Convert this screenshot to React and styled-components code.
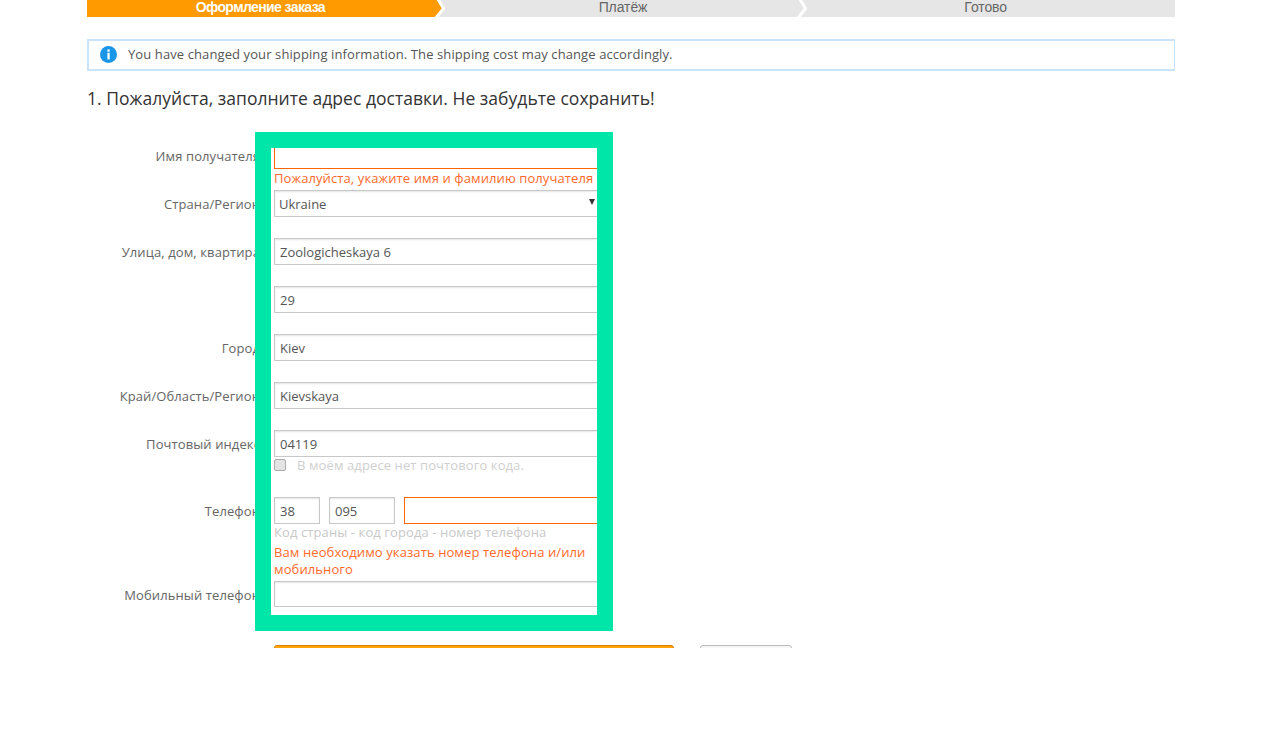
import React from "react";
import styled, { createGlobalStyle } from "styled-components";

const GlobalStyle = createGlobalStyle`
  html, body {
    margin: 0;
    background: #fff;
  }
  body {
    font-family: "Open Sans", "Liberation Sans", sans-serif;
    font-size: 13px;
    letter-spacing: 0.1px;
    color: #555;
  }
`;

const S = {
  Page: styled.div`
    width: 1088px;
    height: 648px;
    margin-left: 87px;
    overflow: hidden;
  `,
  Steps: styled.div`
    display: flex;
    height: 17px;
    background: #e6e6e6;
  `,
  Step: styled.div`
    position: relative;
    flex: 1;
    padding-right: 16px;
    font-family: "Liberation Sans", Arial, sans-serif;
    font-size: 14px;
    line-height: 14px;
    letter-spacing: -0.1px;
    text-align: center;
    color: #666;
  `,
  ActiveFill: styled.div`
    padding-right: 16px;
    margin-right: -16px;
    height: 17px;
    background: #ff9a00;
    color: #fff;
    font-weight: bold;
    letter-spacing: -0.6px;
    clip-path: polygon(0 0, calc(100% - 13px) 0, calc(100% - 7px) 50%, calc(100% - 15px) 100%, 0 100%);
  `,
  Chevron: styled.svg`
    position: absolute;
    top: 0;
    right: 3px;
    width: 16px;
    height: 17px;
  `,
  Alert: styled.div`
    display: flex;
    align-items: center;
    gap: 11px;
    box-sizing: border-box;
    height: 32px;
    margin: 22px -1px 0 0;
    padding: 0 0 2px 11px;
    border: 2px solid #c9e3fd;
    color: #555;
    line-height: 26px;
  `,
  Title: styled.h2`
    margin: 15px 0 0;
    font-size: 17.5px;
    font-weight: 500;
    letter-spacing: 0.03px;
    line-height: 24px;
    color: #333;
  `,
  Form: styled.div`
    position: relative;
    margin-top: 22px;
    padding-top: 10px;
  `,
  Frame: styled.div`
    position: absolute;
    top: 0;
    left: 168px;
    box-sizing: border-box;
    width: 358px;
    height: 499px;
    border: 16px solid #00e6a8;
    pointer-events: none;
  `,
  Row: styled.div`
    display: flex;
    margin-bottom: ${(p) => p.$gap ?? 21}px;
  `,
  LabelCell: styled.div`
    flex: none;
    width: 168px;
    margin-right: 19px;
    overflow: hidden;
  `,
  Label: styled.div`
    width: 173px;
    height: 27px;
    line-height: 29px;
    text-align: right;
    white-space: nowrap;
    color: #666;
  `,
  FieldCell: styled.div`
    position: relative;
    flex: none;
    width: 323px;
    overflow: hidden;
  `,
  Input: styled.input`
    display: block;
    box-sizing: border-box;
    flex: none;
    width: ${(p) => p.$width ?? 400}px;
    height: ${(p) => p.$height ?? 27}px;
    padding: 0 5px;
    border: 1px solid ${(p) => (p.$error ? "#ff6600" : "#c8c8c8")};
    border-radius: 0;
    outline: none;
    box-shadow: ${(p) => (p.$error ? "none" : "inset 0 1px 2px rgba(0, 0, 0, 0.1)")};
    background: #fff;
    font: 13px "Open Sans", sans-serif;
    color: #555;
  `,
  Select: styled.select`
    display: block;
    box-sizing: border-box;
    width: 400px;
    height: 27px;
    padding: 0 4px;
    border: 1px solid #c8c8c8;
    border-radius: 0;
    outline: none;
    appearance: none;
    box-shadow: inset 0 1px 2px rgba(0, 0, 0, 0.1);
    background: #fff;
    font: 13px "Open Sans", sans-serif;
    color: #555;
  `,
  Arrow: styled.span`
    position: absolute;
    top: 9px;
    right: 2px;
    border-style: solid;
    border-width: 6px 3px 0;
    border-color: #333 transparent transparent;
  `,
  Error: styled.div`
    padding-top: ${(p) => p.$top ?? 0}px;
    line-height: 17px;
    color: #ff6a2b;
  `,
  Hint: styled.div`
    line-height: 17px;
    color: #c9c9c9;
  `,
  CheckLine: styled.label`
    display: flex;
    align-items: center;
    gap: 11px;
    height: 16px;
    margin-bottom: 1px;
    color: #cfcfcf;
  `,
  Checkbox: styled.span`
    box-sizing: border-box;
    width: 12px;
    height: 12px;
    border: 1px solid #aaa;
    border-radius: 2px;
    background: #e4e4e4;
  `,
  PhoneLine: styled.div`
    display: flex;
    gap: 9px;
  `,
  Actions: styled.div`
    display: flex;
    gap: 26px;
    margin: 37px 0 0 187px;
  `,
  Primary: styled.button`
    width: 400px;
    height: 36px;
    border: 1px solid #e07b00;
    border-radius: 3px;
    background: #ffa50a;
  `,
  Secondary: styled.button`
    width: 92px;
    height: 36px;
    border: 1px solid #bbb;
    border-radius: 3px;
    background: #f6f6f6;
  `,
};

const ChevronMark = () => (
  <S.Chevron viewBox="0 0 16 17">
    <polyline points="7,-1 12.5,8.5 5,18" fill="none" stroke="#fff" strokeWidth="3" />
  </S.Chevron>
);

const InfoIcon = () => (
  <svg width="17" height="17" viewBox="0 0 17 17">
    <circle cx="8.5" cy="8.5" r="8.5" fill="#1a96e8" />
    <rect x="7.4" y="3.4" width="2.3" height="2.3" fill="#fff" />
    <rect x="7.4" y="6.8" width="2.3" height="6.6" fill="#fff" />
  </svg>
);

const fields = [
  { label: "Улица, дом, квартира", value: "Zoologicheskaya 6" },
  { label: "", value: "29" },
  { label: "Город", value: "Kiev" },
  { label: "Край/Область/Регион", value: "Kievskaya" },
];

const App = () => {
  return (
    <>
      <GlobalStyle />
      <S.Page>
        <S.Steps>
          <S.Step>
            <S.ActiveFill>Оформление заказа</S.ActiveFill>
            <ChevronMark />
          </S.Step>
          <S.Step>
            Платёж
            <ChevronMark />
          </S.Step>
          <S.Step>Готово</S.Step>
        </S.Steps>

        <S.Alert>
          <InfoIcon />
          You have changed your shipping information. The shipping cost may change accordingly.
        </S.Alert>

        <S.Title>1. Пожалуйста, заполните адрес доставки. Не забудьте сохранить!</S.Title>

        <S.Form>
          <S.Row $gap={3}>
            <S.LabelCell>
              <S.Label>Имя получателя</S.Label>
            </S.LabelCell>
            <S.FieldCell>
              <S.Input $error readOnly value="" />
              <S.Error $top={1}>Пожалуйста, укажите имя и фамилию получателя</S.Error>
            </S.FieldCell>
          </S.Row>

          <S.Row>
            <S.LabelCell>
              <S.Label>Страна/Регион</S.Label>
            </S.LabelCell>
            <S.FieldCell>
              <S.Select defaultValue="Ukraine">
                <option>Ukraine</option>
              </S.Select>
              <S.Arrow />
            </S.FieldCell>
          </S.Row>

          {fields.map((field) => (
            <S.Row key={field.value}>
              <S.LabelCell>
                <S.Label>{field.label}</S.Label>
              </S.LabelCell>
              <S.FieldCell>
                <S.Input readOnly value={field.value} />
              </S.FieldCell>
            </S.Row>
          ))}

          <S.Row $gap={23}>
            <S.LabelCell>
              <S.Label>Почтовый индекс</S.Label>
            </S.LabelCell>
            <S.FieldCell>
              <S.Input readOnly value="04119" />
              <S.CheckLine>
                <S.Checkbox />
                В моём адресе нет почтового кода.
              </S.CheckLine>
            </S.FieldCell>
          </S.Row>

          <S.Row $gap={3}>
            <S.LabelCell>
              <S.Label>Телефон</S.Label>
            </S.LabelCell>
            <S.FieldCell>
              <S.PhoneLine>
                <S.Input $width={46} readOnly value="38" />
                <S.Input $width={66} readOnly value="095" />
                <S.Input $width={300} $error readOnly value="" />
              </S.PhoneLine>
              <S.Hint>Код страны - код города - номер телефона</S.Hint>
              <S.Error $top={3}>Вам необходимо указать номер телефона и/или мобильного</S.Error>
            </S.FieldCell>
          </S.Row>

          <S.Row $gap={0}>
            <S.LabelCell>
              <S.Label>Мобильный телефон</S.Label>
            </S.LabelCell>
            <S.FieldCell>
              <S.Input $height={26} readOnly value="" />
            </S.FieldCell>
          </S.Row>

          <S.Frame />
        </S.Form>

        <S.Actions>
          <S.Primary />
          <S.Secondary />
        </S.Actions>
      </S.Page>
    </>
  );
};

export default App;
